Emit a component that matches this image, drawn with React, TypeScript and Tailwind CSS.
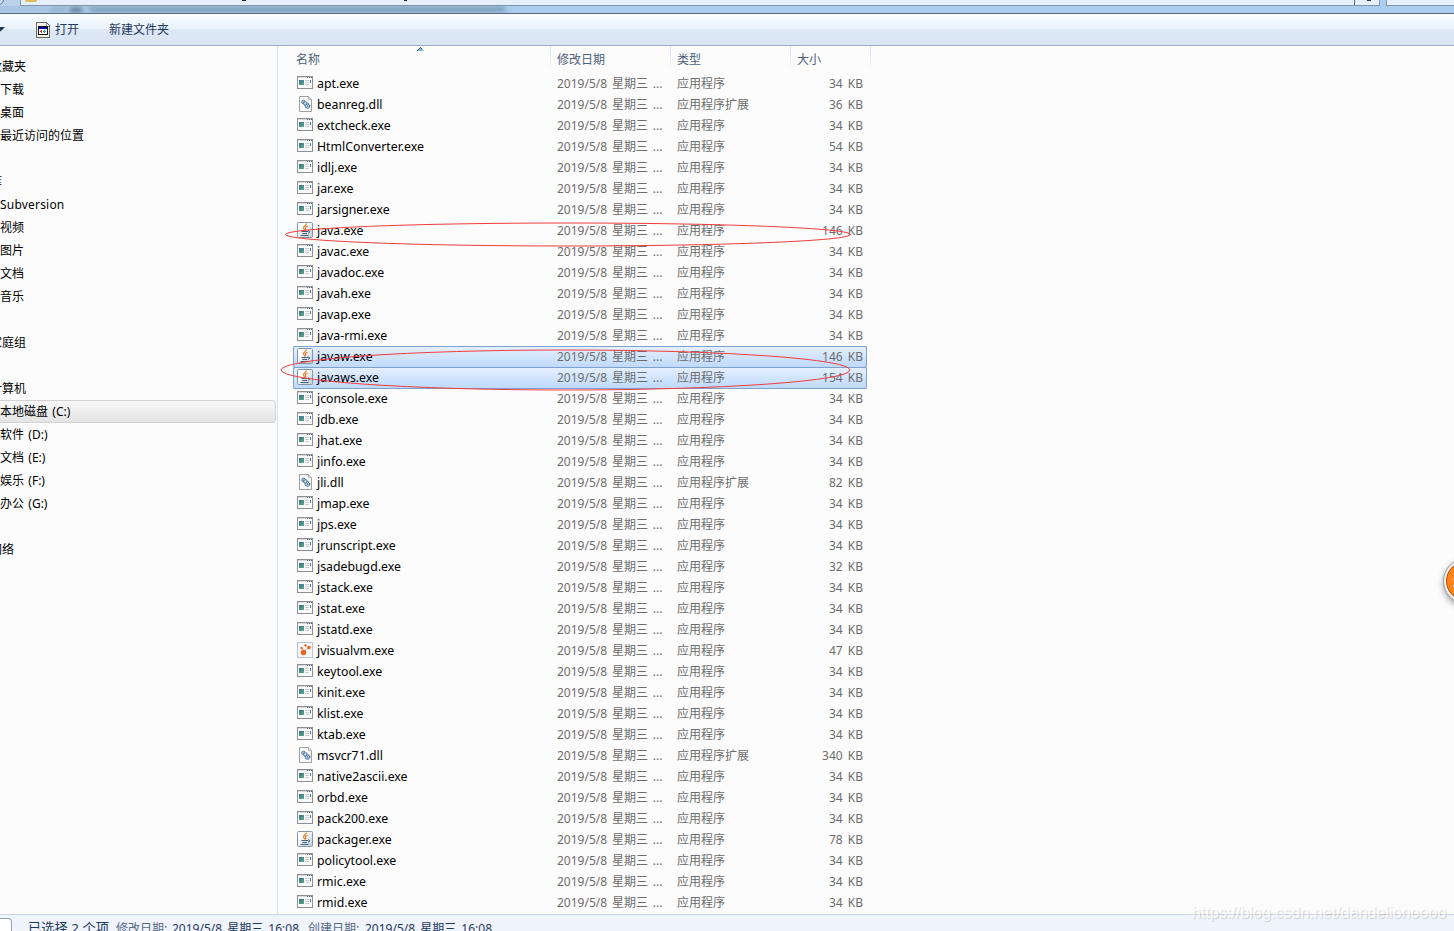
type FileKind = "exe" | "dll" | "java" | "vm";

interface FileRow {
  name: string;
  size: number;
  kind: FileKind;
  selected?: boolean;
}

interface NavItem {
  label: string;
  heading?: boolean;
  active?: boolean;
}

const f = (name: string, size = 34, kind: FileKind = "exe", selected = false): FileRow => ({
  name,
  size,
  kind,
  selected,
});

const files: FileRow[] = [
  f("apt.exe"),
  f("beanreg.dll", 36, "dll"),
  f("extcheck.exe"),
  f("HtmlConverter.exe", 54),
  f("idlj.exe"),
  f("jar.exe"),
  f("jarsigner.exe"),
  f("java.exe", 146, "java"),
  f("javac.exe"),
  f("javadoc.exe"),
  f("javah.exe"),
  f("javap.exe"),
  f("java-rmi.exe"),
  f("javaw.exe", 146, "java", true),
  f("javaws.exe", 154, "java", true),
  f("jconsole.exe"),
  f("jdb.exe"),
  f("jhat.exe"),
  f("jinfo.exe"),
  f("jli.dll", 82, "dll"),
  f("jmap.exe"),
  f("jps.exe"),
  f("jrunscript.exe"),
  f("jsadebugd.exe", 32),
  f("jstack.exe"),
  f("jstat.exe"),
  f("jstatd.exe"),
  f("jvisualvm.exe", 47, "vm"),
  f("keytool.exe"),
  f("kinit.exe"),
  f("klist.exe"),
  f("ktab.exe"),
  f("msvcr71.dll", 340, "dll"),
  f("native2ascii.exe"),
  f("orbd.exe"),
  f("pack200.exe"),
  f("packager.exe", 78, "java"),
  f("policytool.exe"),
  f("rmic.exe"),
  f("rmid.exe"),
];

const navGroups: NavItem[][] = [
  [{ label: "收藏夹", heading: true }, { label: "下载" }, { label: "桌面" }, { label: "最近访问的位置" }],
  [
    { label: "库", heading: true },
    { label: "Subversion" },
    { label: "视频" },
    { label: "图片" },
    { label: "文档" },
    { label: "音乐" },
  ],
  [{ label: "家庭组", heading: true }],
  [
    { label: "计算机", heading: true },
    { label: "本地磁盘 (C:)", active: true },
    { label: "软件 (D:)" },
    { label: "文档 (E:)" },
    { label: "娱乐 (F:)" },
    { label: "办公 (G:)" },
  ],
  [{ label: "网络", heading: true }],
];

function FileIcon({ kind }: { kind: FileKind }) {
  if (kind === "dll") {
    return (
      <svg width="16" height="16" viewBox="0 0 16 16" className="-mt-px shrink-0">
        <path d="M2.5 .5h9l3 3v12h-12z" fill="#fafafa" stroke="#a0a0a0" />
        <path d="M11.5 .5v3h3" fill="#e4e4e4" stroke="#b4b4b4" />
        <circle cx="6.5" cy="6" r="1.8" fill="#dceaf5" stroke="#47759f" />
        <circle cx="8.500" cy="7.500" r="1.800" fill="#dceaf5" stroke="#47759f" />
        <circle cx="10.500" cy="10" r="2.200" fill="#dceaf5" stroke="#3e6c96" strokeDasharray="1.400 .5" strokeWidth="1.300" />
        <circle cx="6.500" cy="6" r=".6" fill="#28527a" />
        <circle cx="10.500" cy="10" r=".8" fill="#28527a" />
      </svg>
    );
  }
  if (kind === "java") {
    return (
      <svg width="16" height="16" viewBox="0 0 16 16" className="-mt-px shrink-0">
        <defs>
          <linearGradient id="javaBg" x1="0" y1="0" x2="1" y2="1">
            <stop offset="0.3" stopColor="#ffffff" />
            <stop offset="1" stopColor="#bccad6" />
          </linearGradient>
        </defs>
        <rect x=".5" y=".5" width="15" height="15" rx="1" fill="url(#javaBg)" stroke="#8496a6" />
        <path
          d="M9.500 1.500C9.500 3.500 6 4 6.500 6c.2.800 1 1.300 1.200 2.300M10.500 4.200C8.500 4.800 8 5.500 8.600 6.500c.4.700.2 1.300-.3 1.800"
          fill="none"
          stroke="#e8812a"
          strokeWidth="1.200"
        />
        <path d="M4.500 9.500h6.500M5.200 11.500h5M3.500 13.500h8" fill="none" stroke="#3f637f" />
        <path d="M11 9c2.200-.4 2.300 1.900 0 2.200" fill="none" stroke="#3f637f" />
      </svg>
    );
  }
  if (kind === "vm") {
    return (
      <svg width="16" height="16" viewBox="0 0 16 16" className="-mt-px shrink-0">
        <rect x=".5" y=".5" width="15" height="15" fill="#f7f8fa" stroke="#b9c6d3" />
        <path d="M7 10L5 6M7 10l5-5" stroke="#f3a583" />
        <circle cx="6.500" cy="10.500" r="2.700" fill="#ec6426" />
        <circle cx="12" cy="5.500" r="1.800" fill="#ec6426" />
        <circle cx="4.500" cy="6" r="1.200" fill="#ec6426" />
        <circle cx="8.500" cy="3.500" r="1.200" fill="#ec6426" />
      </svg>
    );
  }
  return (
    <svg width="16" height="16" viewBox="0 0 16 16" className="-mt-px shrink-0" shapeRendering="crispEdges">
      <defs>
        <linearGradient id="exePane" x1="0" y1="0" x2="1" y2="1">
          <stop offset="0" stopColor="#3d6a9c" />
          <stop offset="1" stopColor="#58b07c" />
        </linearGradient>
      </defs>
      <path d="M0 1h16v13H0z" fill="#8b9197" />
      <path d="M1 2h14v1H1z" fill="#d5d9dd" />
      <path d="M1 3h14v10H1z" fill="#fafafa" />
      <path d="M10 2h1v1h-1zM12 2h1v1h-1zM14 2h1v1h-1z" fill="#5c6670" />
      <path d="M2 5h5v5H2z" fill="url(#exePane)" />
      <path d="M8 5h4v1H8zM8 7h4v1H8zM8 9h4v1H8z" fill="#cccfd2" />
      <path d="M13 5h1v3h-1z" fill="#3f7d94" />
    </svg>
  );
}

function AddressBar() {
  return (
    <div className="flex h-[13px] shrink-0 items-start overflow-hidden bg-[#aacdf0]">
      <div className="relative h-full w-5 shrink-0 bg-[#b9d2e9]">
        <div className="absolute -top-2 -left-3 h-3.5 w-4 rounded-full border border-[#66798e] bg-[#c9def2]" />
      </div>
      <div className="flex h-[6px] w-[1360px] shrink-0 border border-t-0 border-[#8394aa] bg-[#e6f0fa]">
        <div className="ml-1 h-[2px] w-3 rounded-b-sm bg-[#dfbd55]" />
        <div className="ml-[205px] h-px w-1 bg-[#222]" />
        <div className="ml-[158px] h-px w-[3px] bg-[#222]" />
        <div className="ml-auto h-full w-px bg-[#5d6670]" />
        <div className="mr-2 ml-3 h-px w-1 bg-[#1d355a]" />
      </div>
      <div className="ml-1.5 h-[6px] flex-1 border border-t-0 border-r-0 border-[#8394aa] bg-[#e6f0fa]" />
      {/* glass frame with the window behind it showing through */}
      <div className="absolute top-[6px] left-0 h-[7px] w-[520px] overflow-hidden">
        <div className="flex h-full items-center bg-gradient-to-r from-[#a9c7e4] from-95% to-[#aacdf0]">
          <div className="ml-[50px] h-1 w-4 bg-[#8fafcd] blur-[2px]" />
          <div className="ml-1 h-1 w-3 bg-[#52708f] blur-[2px]" />
          <div className="ml-2 h-[5px] w-[415px] bg-[#7d9dbd] blur-[2px]" />
        </div>
      </div>
    </div>
  );
}

function Toolbar() {
  return (
    <div className="flex h-[33px] shrink-0 items-center border-t border-b border-t-[#566a80] border-b-[#9faec8] bg-[linear-gradient(to_bottom,#fcfeff_0px,#e8f2fb_15px,#dce6f4_16px,#dbe6f4_30px)] text-[#1e395b]">
      <svg width="5" height="5" viewBox="0 0 5 5">
        <path d="M-4 0h9L.5 4.500z" fill="#1e395b" />
      </svg>
      <svg width="15" height="16" viewBox="0 0 15 16" className="ml-[31px]" shapeRendering="crispEdges">
        <path d="M.5 .5h10l3 3v12H.5z" fill="#f3f1e8" stroke="#686660" />
        <path d="M10 1v3h3" fill="none" stroke="#999" />
        <rect x="2" y="4" width="10" height="9" fill="#101010" />
        <rect x="3" y="5" width="8" height="2" fill="#0000a0" />
        <rect x="3" y="7" width="8" height="5" fill="#fff" />
        <path d="M4 9h1v-1h1v3H5v-1H4z" fill="#e02020" />
        <path d="M7 9h1v1H7z" fill="#20a040" />
        <path d="M8 8h1v3H8zM9 9h1v1H9z" fill="#208fd0" />
      </svg>
      <span className="ml-1">打开</span>
      <span className="ml-[30px]">新建文件夹</span>
    </div>
  );
}

function Sidebar() {
  return (
    <nav className="w-[278px] shrink-0 overflow-hidden border-r border-[#d6e5f5] pt-[9px] text-black">
      {navGroups.map((group, i) => (
        <div key={i} className="mb-[23px]">
          {group.map((item) => (
            <div
              key={item.label}
              className={
                item.active
                  ? "mr-px flex h-[23px] items-center rounded-r-sm border border-l-0 border-[#d3d3d3] bg-gradient-to-b from-[#f8f8f8] to-[#e4e4e4]"
                  : "flex h-[23px] items-center"
              }
            >
              <span
                className={
                  item.heading
                    ? "-ml-2.5 whitespace-nowrap"
                    : item.label === "Subversion"
                      ? "tracking-[0.2px]"
                      : "whitespace-nowrap [word-spacing:1.2px]"
                }
              >
                {item.label}
              </span>
            </div>
          ))}
        </div>
      ))}
    </nav>
  );
}

function ColumnDivider() {
  return <div className="h-[22px] w-px shrink-0 bg-gradient-to-b from-[#d5e5f6] to-[#f3f8fc]" />;
}

function ColumnHeader() {
  return (
    <div className="relative flex h-[27px] text-[#4c607a]">
      <svg width="7" height="4" viewBox="0 0 7 4" className="absolute top-px left-[139px]">
        <path d="M0 4L3.500 0 7 4z" fill="#7db4d0" />
        <path d="M0 4L3.500 .5 5 2" fill="none" stroke="#3a5f7c" />
      </svg>
      <div className="w-[272px] pt-[5px] pl-[18px]">名称</div>
      <ColumnDivider />
      <div className="w-[119px] pt-[5px] pl-1.5">修改日期</div>
      <ColumnDivider />
      <div className="w-[119px] pt-[5px] pl-1.5">类型</div>
      <ColumnDivider />
      <div className="w-[79px] pt-[5px] pl-1.5">大小</div>
      <ColumnDivider />
    </div>
  );
}

function FileLine({ file }: { file: FileRow }) {
  return (
    <div
      className={
        file.selected
          ? "ml-[15px] flex h-[21px] w-[574px] items-center rounded-[2px] bg-gradient-to-b from-[#e6f0fd] to-[#bfdafc] text-[#6d6d6d] shadow-[inset_1px_0_0_#7da2ce,inset_-1px_0_0_#7da2ce,inset_0_1px_0_#7da2ce,0_1px_0_#7da2ce]"
          : "ml-[15px] flex h-[21px] w-[574px] items-center text-[#6d6d6d]"
      }
    >
      <div className="flex w-[264px] items-center gap-1 pl-1">
        <FileIcon kind={file.kind} />
        <span className="text-[12.3px] text-black">{file.name}</span>
      </div>
      <span className="w-[120px] whitespace-pre [word-spacing:1.7px]">2019/5/8 星期三 ...</span>
      <span className="w-[100px]">{file.kind === "dll" ? "应用程序扩展" : "应用程序"}</span>
      <span className="w-[86px] text-right [word-spacing:2px]">{file.size} KB</span>
    </div>
  );
}

function StatusBar() {
  return (
    <footer className="flex h-[17px] shrink-0 overflow-hidden border-t border-[#c9d8e9] bg-[#f0f4fc] whitespace-nowrap text-[#1e395b]">
      <div className="mt-[3px] h-6 w-3 shrink-0 rounded-tr-[4px] border border-l-0 border-[#93a2b4] bg-white" />
      <span className="ml-4 w-[88px] pt-[5px] text-[13.3px]">已选择 2 个项</span>
      <span className="w-14 pt-[5px] text-[#5a6a80]">修改日期:</span>
      <span className="w-[136px] pt-[5px] [word-spacing:2px]">2019/5/8 星期三 16:08</span>
      <span className="w-[57px] pt-[5px] text-[#5a6a80]">创建日期:</span>
      <span className="pt-[5px] [word-spacing:2px]">2019/5/8 星期三 16:08</span>
    </footer>
  );
}

export default function App() {
  return (
    <div className="relative flex h-[931px] w-[1454px] flex-col overflow-hidden bg-[#fcfcfc] font-['Noto_Sans','Noto_Sans_CJK_SC',sans-serif] text-[12px] leading-[17px]">
      <AddressBar />
      <Toolbar />
      <div className="flex min-h-0 flex-1">
        <Sidebar />
        <main className="flex-1">
          <ColumnHeader />
          {files.map((file) => (
            <FileLine key={file.name} file={file} />
          ))}
        </main>
      </div>
      <StatusBar />

      {/* hand-marked ellipses */}
      <svg width="1454" height="931" className="pointer-events-none absolute inset-0">
        <g fill="none" stroke="#f23c3c" strokeWidth="1">
          <ellipse cx="568" cy="234.500" rx="282.500" ry="11.500" />
          <ellipse cx="565.500" cy="370" rx="284.500" ry="20" />
        </g>
      </svg>

      <div className="absolute top-[558px] left-[1443px] h-[46px] w-[46px] rounded-full border border-[#999] bg-[#f4f4f4] p-[2px] shadow-[0_3px_6px_rgba(0,0,0,0.35)]">
        <div className="h-full w-full rounded-full border border-[#a8480c] bg-[#ff8519] pt-3 pl-1.5 text-[12px] font-bold text-white">
          36
        </div>
      </div>

      <div className="absolute top-[903px] left-[1192px] font-['Liberation_Sans',sans-serif] text-[16px] leading-[20px] tracking-[0.05px] text-white/80 [text-shadow:1px_1px_1px_rgba(0,0,0,0.16)]">
        https://blog.csdn.net/dandelionoooo
      </div>
    </div>
  );
}
